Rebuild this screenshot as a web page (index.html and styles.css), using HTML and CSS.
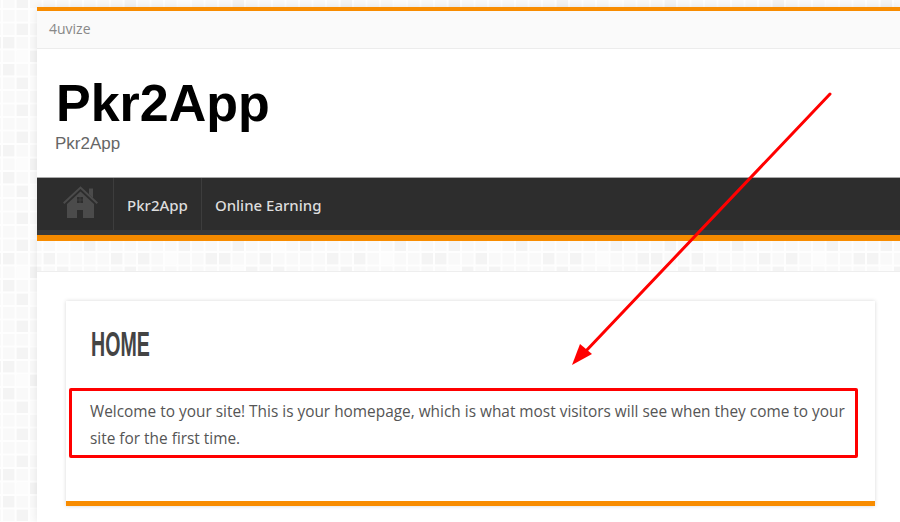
FILE: index.html
```html
<!DOCTYPE html>

<html lang="en">
    <head>
        <title>Pkr2App</title>

        <link rel="stylesheet" href="styles.css">

    </head>

    <body>
        <div class="container">
            <div class="topbar">4uvize</div>

            <div class="masthead">
                <h1>Pkr2App</h1>
                <p class="tagline">Pkr2App</p>
            </div>

            <div class="nav">
                <a class="nav-home">
                    <svg class="home-icon" width="35" height="33" viewBox="0 0 35 33">
                        <path d="M26 2.500h4v9.500l-4-3.700z" fill="#4b4b4b"/>
                        <path d="M.700 17.300 17.500 1.500l16.800 15.800" fill="none" stroke="#4b4b4b" stroke-width="2"/>
                        <path fill-rule="evenodd" d="M17.500 5.500 31 18v14H20v-8h-6v8H4V18zM14 11v2.700h2.700V11zM17.300 11v2.700H20V11zM14 14.300V17h2.700v-2.700zM17.300 14.300V17H20v-2.700z" fill="#4b4b4b"/>
                    </svg>
                </a>
                <a class="nav-link">Pkr2App</a>
                <a class="nav-link">Online Earning</a>
            </div>

            <div class="content">
                <div class="card">
                    <h2>Home</h2>
                    <p class="intro">Welcome to your site! This is your homepage, which is what most visitors will see when they come to your site for the first time.</p>
                </div>
            </div>
        </div>

        <!-- red markup drawn on top of the screenshot -->
        <div class="callout"></div>
        <svg class="arrow" width="900" height="522" viewBox="0 0 900 522">
            <line x1="830" y1="94" x2="585" y2="352" stroke="#f00" stroke-width="3" stroke-linecap="round"/>
            <polygon points="572,365 580,344 592,354" fill="#f00"/>
        </svg>
    </body>
</html>
```

FILE: styles.css
```css
body, html {
    margin: 0;
    height: 100%;
    overflow: hidden;
}

body {
    position: relative;
    padding-top: 7px;
    box-sizing: border-box;
    background-color: #f9f9f9;
    background-position: 2.400px 9px;
    background-image: url("data:image/svg+xml,%3Csvg xmlns='http://www.w3.org/2000/svg' width='216' height='108'%3E%3Cg fill='%23f4f4f4'%3E%3Crect x='14.500' y='14.500' width='11.500' height='11.500'/%3E%3Crect x='82' y='14.500' width='11.500' height='11.500'/%3E%3Crect x='176.500' y='14.500' width='11.500' height='11.500'/%3E%3Crect x='1' y='28' width='11.500' height='11.500'/%3E%3Crect x='41.500' y='28' width='11.500' height='11.500'/%3E%3Crect x='109' y='28' width='11.500' height='11.500'/%3E%3Crect x='136' y='28' width='11.500' height='11.500'/%3E%3Crect x='203.500' y='28' width='11.500' height='11.500'/%3E%3Crect x='28' y='41.500' width='11.500' height='11.500'/%3E%3Crect x='55' y='41.500' width='11.500' height='11.500'/%3E%3Crect x='122.500' y='41.500' width='11.500' height='11.500'/%3E%3Crect x='1' y='55' width='11.500' height='11.500'/%3E%3Crect x='95.500' y='55' width='11.500' height='11.500'/%3E%3Crect x='163' y='55' width='11.500' height='11.500'/%3E%3Crect x='14.500' y='68.500' width='11.500' height='11.500'/%3E%3Crect x='68.500' y='68.500' width='11.500' height='11.500'/%3E%3Crect x='149.500' y='68.500' width='11.500' height='11.500'/%3E%3Crect x='41.500' y='82' width='11.500' height='11.500'/%3E%3Crect x='190' y='82' width='11.500' height='11.500'/%3E%3Crect x='14.500' y='95.500' width='11.500' height='11.500'/%3E%3Crect x='122.500' y='95.500' width='11.500' height='11.500'/%3E%3Crect x='68.500' y='1' width='11.500' height='11.500'/%3E%3Crect x='149.500' y='1' width='11.500' height='11.500'/%3E%3C/g%3E%3Cg fill='%23fcfcfc'%3E%3Crect x='28' y='1' width='11.500' height='11.500'/%3E%3Crect x='55' y='14.500' width='11.500' height='11.500'/%3E%3Crect x='163' y='28' width='11.500' height='11.500'/%3E%3Crect x='14.500' y='41.500' width='11.500' height='11.500'/%3E%3Crect x='82' y='55' width='11.500' height='11.500'/%3E%3Crect x='28' y='68.500' width='11.500' height='11.500'/%3E%3Crect x='122.500' y='82' width='11.500' height='11.500'/%3E%3Crect x='176.500' y='95.500' width='11.500' height='11.500'/%3E%3C/g%3E%3Cpath d='M0 0H216M0 13.500H216M0 27H216M0 40.500H216M0 54H216M0 67.500H216M0 81H216M0 94.500H216M0 108H216M0 0V108M13.500 0V108M27 0V108M40.500 0V108M54 0V108M67.500 0V108M81 0V108M94.500 0V108M108 0V108M121.500 0V108M135 0V108M148.500 0V108M162 0V108M175.500 0V108M189 0V108M202.500 0V108M216 0V108' stroke='%23fefefe' stroke-width='2'/%3E%3C/svg%3E");
    font-family: "Open Sans", sans-serif;
}

.container {
    margin-left: 37px;
    box-shadow: 0 0 8px rgba(0, 0, 0, 0.09);
}

.topbar {
    height: 37px;
    line-height: 36px;
    padding-left: 12px;
    border-top: 4px solid #f88c00;
    border-bottom: 1px solid #ececec;
    background: #fafafa;
    color: #888;
    font-size: 14px;
}

.masthead {
    height: 128px;
    padding-left: 19px;
    background: white;
    font-family: "Liberation Sans", Arial, sans-serif;
}

.masthead h1 {
    margin: 0;
    padding-top: 24px;
    color: black;
    font-size: 52px;
    line-height: 60px;
}

.tagline {
    margin: 0 0 0 -1px;
    padding-top: 1px;
    color: #666;
    font-size: 17px;
    line-height: 20px;
}

.nav {
    display: flex;
    height: 52px;
    border-top: 1px solid #aaa;
    border-bottom: 5px solid #3a3a3a;
    background: #2d2d2d;
    box-shadow: 0 6px 0 #f88c00;
}

.nav-home {
    display: flex;
    align-items: center;
    width: 77px;
    padding-left: 26px;
    box-sizing: border-box;
    border-right: 1px solid #3d3d3d;
}

.home-icon {
    margin-top: -3px;
}

.nav-link {
    padding: 0 13px;
    border-right: 1px solid #3d3d3d;
    color: #ddd;
    font-family: "Noto Sans", sans-serif;
    font-size: 15px;
    font-weight: 500;
    line-height: 55px;
}

.nav-link:last-child {
    border-right: none;
}

.content {
    margin-top: 36px;
    height: 221px;
    padding: 29px 25px 0 29px;
    border-top: 1px solid #eee;
    background: white;
}

.card {
    height: 200px;
    padding: 0 25px;
    border-bottom: 5px solid #f88c00;
    box-shadow: 0 0 4px rgba(0, 0, 0, 0.16);
}

/* no condensed face is installed, so squeeze the heading */
.card h2 {
    margin: 0;
    padding-top: 25px;
    color: #444;
    font-family: "Liberation Sans", sans-serif;
    font-size: 35px;
    font-weight: 700;
    line-height: 36px;
    text-transform: uppercase;
    transform: scaleX(0.56);
    transform-origin: left;
}

.intro {
    margin: 36px 0 0 -1px;
    color: #555;
    font-size: 15.400px;
    line-height: 27px;
}

.callout {
    position: absolute;
    top: 388px;
    left: 69px;
    width: 783px;
    height: 64px;
    border: 3px solid #f00;
    border-radius: 2px;
}

.arrow {
    position: absolute;
    top: 0;
    left: 0;
}
```
